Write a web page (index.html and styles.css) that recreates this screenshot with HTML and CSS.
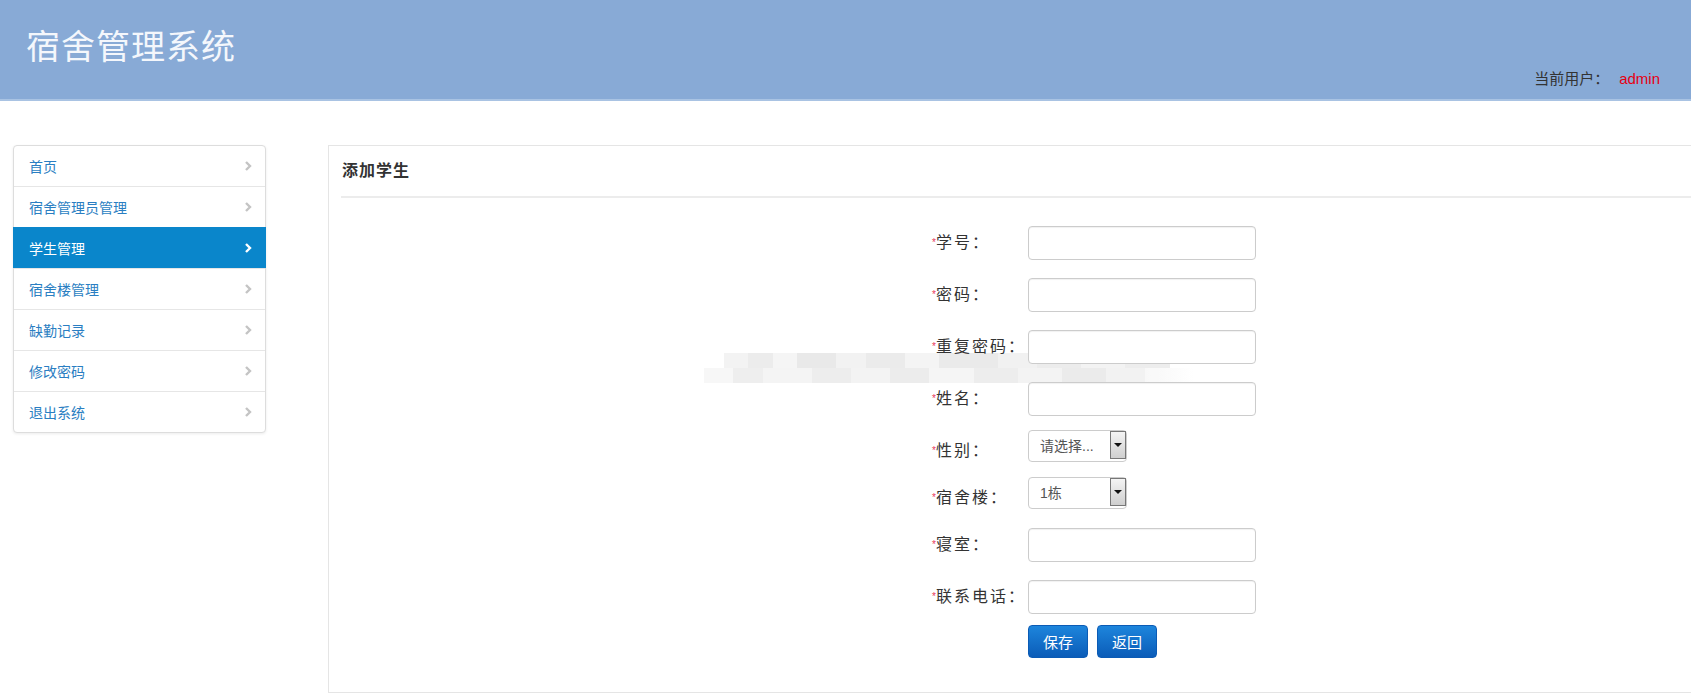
FILE: index.html
```html
<!DOCTYPE html>
<html lang="zh-CN">
<head>
<meta charset="utf-8" />
<title>宿舍管理系统</title>
<link rel="stylesheet" href="styles.css">
</head>

<body>
<div class="header">
	<h1 class="logo">宿舍管理系统</h1>
	<div class="user">当前用户：<span class="user-name">admin</span></div>
</div>
<div class="wrap">
	<ul class="nav">
		<li><a href="javascript:;">首页<svg class="chev" viewBox="0 0 8 12"><polyline points="2,2 6,6 2,10"/></svg></a></li>
		<li><a href="javascript:;">宿舍管理员管理<svg class="chev" viewBox="0 0 8 12"><polyline points="2,2 6,6 2,10"/></svg></a></li>
		<li class="active"><a href="javascript:;">学生管理<svg class="chev" viewBox="0 0 8 12"><polyline points="2,2 6,6 2,10"/></svg></a></li>
		<li><a href="javascript:;">宿舍楼管理<svg class="chev" viewBox="0 0 8 12"><polyline points="2,2 6,6 2,10"/></svg></a></li>
		<li><a href="javascript:;">缺勤记录<svg class="chev" viewBox="0 0 8 12"><polyline points="2,2 6,6 2,10"/></svg></a></li>
		<li><a href="javascript:;">修改密码<svg class="chev" viewBox="0 0 8 12"><polyline points="2,2 6,6 2,10"/></svg></a></li>
		<li><a href="javascript:;">退出系统<svg class="chev" viewBox="0 0 8 12"><polyline points="2,2 6,6 2,10"/></svg></a></li>
	</ul>
	<div class="panel">
		<div class="panel-title">添加学生</div>
		<!-- 打码区域 -->
		<div class="mosaic"></div>
		<form class="form">
			<div class="row"><label><em>*</em>学号：</label><input type="text" /></div>
			<div class="row"><label><em>*</em>密码：</label><input type="password" /></div>
			<div class="row"><label><em>*</em>重复密码：</label><input type="password" /></div>
			<div class="row"><label><em>*</em>姓名：</label><input type="text" /></div>
			<div class="row row-sel">
				<label><em>*</em>性别：</label>
				<span class="sel"><select><option>请选择...</option><option>男</option><option>女</option></select><b class="sel-btn"></b></span>
			</div>
			<div class="row row-sel">
				<label><em>*</em>宿舍楼：</label>
				<span class="sel"><select><option>1栋</option><option>2栋</option></select><b class="sel-btn"></b></span>
			</div>
			<div class="row"><label><em>*</em>寝室：</label><input type="text" /></div>
			<div class="row"><label><em>*</em>联系电话：</label><input type="text" /></div>
			<div class="row row-btn">
				<button type="button" class="btn">保存</button>
				<button type="button" class="btn">返回</button>
			</div>
		</form>
	</div>
</div>
</body>
</html>
```

FILE: styles.css
```css
* {padding:0;margin:0;box-sizing:border-box;}
body {font-family:"Liberation Sans","Noto Sans CJK SC",sans-serif;font-size:14px;color:#333;background:#fff;overflow:hidden;}

/*顶部*/
.header {height:101px;background:#88aad6;border-bottom:2px solid #a9c3e3;display:flex;justify-content:space-between;}
.logo {font-size:34px;font-weight:normal;color:#f4f7fc;line-height:40px;padding:27px 0 0 26px;letter-spacing:1px;}
.user {align-self:flex-end;padding:0 31px 10px 0;font-size:15px;color:#333;line-height:20px;}
.user-name {color:#e60012;margin-left:10px;font-size:15px;}

.wrap {display:flex;align-items:flex-start;padding-top:44px;}

/*左侧菜单*/
.nav {list-style:none;width:253px;margin-left:13px;border:1px solid #ddd;border-radius:4px;box-shadow:0 1px 3px rgba(0,0,0,0.08);background:#fff;}
.nav li {border-top:1px solid #e6e6e6;}
.nav li:first-child {border-top:none;}
.nav li a {display:flex;justify-content:space-between;align-items:center;height:40px;padding:0 13px 0 15px;color:#2a7ec2;text-decoration:none;font-size:14px;}
.nav .chev {width:8px;height:12px;fill:none;stroke:#c4c4c4;stroke-width:2.4;}
.nav li.active {margin:0 -1px;border-top-color:#0a86cb;}
.nav li.active a {background:#0a86cb;color:#fff;padding-left:16px;padding-right:14px;}
.nav li.active .chev {stroke:#fff;}

/*右侧内容*/
.panel {position:relative;flex:1;margin-left:62px;margin-right:-20px;height:548px;border:1px solid #e5e5e5;background:#fff;}
.panel-title {margin-left:12px;height:52px;line-height:50px;padding-left:1px;font-weight:bold;font-size:16px;letter-spacing:1px;color:#333;border-bottom:2px solid #ececec;}
.mosaic {position:absolute;left:375px;top:207px;width:490px;height:30px;opacity:0.85;
	background:
		linear-gradient(90deg,transparent 0,transparent 4%,#f1f1f1 4%,#f1f1f1 9%,#e9e9e9 9%,#e9e9e9 14%,#f4f4f4 14%,#f4f4f4 19%,#e6e6e6 19%,#e6e6e6 27%,#f0f0f0 27%,#f0f0f0 33%,#e8e8e8 33%,#e8e8e8 41%,#f3f3f3 41%,#f3f3f3 48%,#e7e7e7 48%,#e7e7e7 60%,#efefef 60%,#efefef 68%,#e9e9e9 68%,#e9e9e9 77%,#f2f2f2 77%,#f2f2f2 86%,#ebebeb 86%,#ebebeb 95%,transparent 95%) top/100% 50% no-repeat,
		linear-gradient(90deg,#f6f6f6 0,#f6f6f6 6%,#ececec 6%,#ececec 12%,#f3f3f3 12%,#f3f3f3 22%,#eaeaea 22%,#eaeaea 30%,#f1f1f1 30%,#f1f1f1 38%,#e9e9e9 38%,#e9e9e9 46%,#f4f4f4 46%,#f4f4f4 55%,#ebebeb 55%,#ebebeb 64%,#f2f2f2 64%,#f2f2f2 73%,#e8e8e8 73%,#e8e8e8 82%,#f0f0f0 82%,#f0f0f0 90%,#f7f7f7 90%,transparent 100%) bottom/100% 50% no-repeat;}

/*表单*/
.form {position:relative;padding:19px 0 0 603px;}
.row {display:flex;align-items:center;padding:9px 0;}
.row label {width:96px;flex:none;white-space:nowrap;font-size:16px;letter-spacing:2px;color:#333;line-height:20px;}
.row label em {font-style:normal;color:#e8375a;font-size:10px;letter-spacing:0;vertical-align:top;}
.row input {width:228px;height:34px;border:1px solid #ccc;border-radius:4px;box-shadow:inset 0 1px 1px rgba(0,0,0,0.06);padding:0 8px;font-size:14px;}
.row-sel {padding:5px 0 0;}
.sel {position:relative;display:inline-block;width:99px;height:32px;margin-bottom:10px;}
.sel select {width:99px;height:32px;border:1px solid #ccc;border-radius:4px;padding:0 0 0 11px;font-size:14px;color:#555;background:#fff;appearance:none;-webkit-appearance:none;font-family:"Liberation Sans","Noto Sans CJK SC",sans-serif;}
.sel-btn {position:absolute;right:1px;top:1px;width:16px;height:28px;border:1px solid #777;background:linear-gradient(#f4f4f4,#cfcfcf);}
.sel-btn:after {content:"";position:absolute;left:3px;top:11px;border-left:4px solid transparent;border-right:4px solid transparent;border-top:4px solid #111;}
.row-btn {padding:2px 0 0 96px;}
.btn {width:60px;height:33px;margin-right:9px;border:1px solid #0b5bb5;border-radius:4px;color:#fff;font-size:15px;background:linear-gradient(#1d85dc,#0b5cb8);font-family:"Liberation Sans","Noto Sans CJK SC",sans-serif;cursor:pointer;}
```
